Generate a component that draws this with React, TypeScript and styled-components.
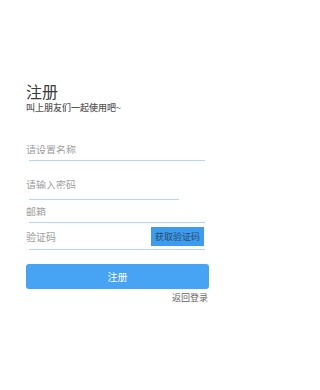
import React from 'react';
import styled, {createGlobalStyle} from 'styled-components';

const GlobalStyle = createGlobalStyle`
  html, body {
    margin: 0;
    padding: 0;
    background: #ffffff;
  }
  body {
    font-family: "Noto Sans CJK SC", "Noto Sans", sans-serif;
  }
`;

const Page = styled.div`
  width: 235px;
  height: 390px;
  box-sizing: border-box;
  padding: 83px 26px 0 26px;
  background: #ffffff;
`;

const Title = styled.h1`
  margin: 0;
  font-size: 16px;
  line-height: 16px;
  font-weight: 400;
  color: #3c3c3c;
`;

const Subtitle = styled.div`
  margin-top: 4px;
  font-size: 9px;
  line-height: 9px;
  font-weight: 500;
  color: #555555;
`;

const Field = styled.div<{ $top: number }>`
  margin-top: ${p => p.$top}px;
  display: flex;
  flex-direction: column;
`;

const Row = styled.div`
  display: flex;
  align-items: center;
  justify-content: space-between;
  height: 19px;
`;

const Input = styled.input`
  border: none;
  outline: none;
  padding: 0;
  margin: 0;
  height: 10px;
  width: 110px;
  font-family: inherit;
  font-size: 10px;
  line-height: 10px;
  color: #333;
  background: transparent;

  &::placeholder {
    color: #9e9e9e;
  }
`;

const Line = styled.div<{ $gap: number; $short?: boolean }>`
  margin-top: ${p => p.$gap}px;
  margin-left: 3px;
  width: ${p => (p.$short ? 150 : 176)}px;
  height: 1px;
  background: #b2d8f4;
`;

const CodeButton = styled.button`
  border: none;
  padding: 0;
  margin-right: 5px;
  width: 53px;
  height: 19px;
  background: #3c9cf0;
  color: #2f4b66;
  font-family: inherit;
  font-size: 9px;
  line-height: 19px;
`;

const Submit = styled.button`
  display: block;
  margin-top: 14px;
  width: 183px;
  height: 25px;
  border: none;
  border-radius: 3px;
  background: #47a3f3;
  color: #ffffff;
  font-family: inherit;
  font-size: 10px;
`;

const BackLink = styled.a`
  display: block;
  margin-top: 4px;
  text-align: right;
  padding-right: 1px;
  font-size: 9px;
  line-height: 9px;
  color: #666666;
  text-decoration: none;
`;

export default function App() {
    return (
        <>
            <GlobalStyle/>
            <Page>
                <Title>注册</Title>
                <Subtitle>叫上朋友们一起使用吧~</Subtitle>

                <Field $top={32}>
                    <Input placeholder="请设置名称"/>
                    <Line $gap={6}/>
                </Field>

                <Field $top={18}>
                    <Input type="password" placeholder="请输入密码"/>
                    <Line $gap={10} $short/>
                </Field>

                <Field $top={6}>
                    <Input placeholder="邮箱"/>
                    <Line $gap={6}/>
                </Field>

                <Field $top={4}>
                    <Row>
                        <Input placeholder="验证码"/>
                        <CodeButton>获取验证码</CodeButton>
                    </Row>
                    <Line $gap={3}/>
                </Field>

                <Submit>注册</Submit>
                <BackLink href="#">返回登录</BackLink>
            </Page>
        </>
    );
}
